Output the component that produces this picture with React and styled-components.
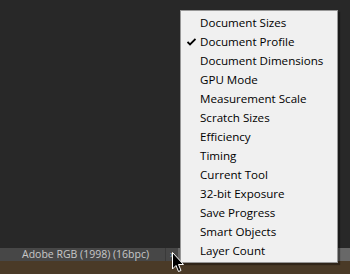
import React from 'react';
import styled, { createGlobalStyle } from 'styled-components';

const GlobalStyle = createGlobalStyle`
  html, body {
    margin: 0;
    padding: 0;
    background: #282828;
  }
  * { box-sizing: border-box; }
`

const Screen = styled.div`
  position: relative;
  width: 350px;
  height: 274px;
  display: flex;
  flex-direction: column;
  overflow: hidden;
  font-family: "Open Sans", "Noto Sans", sans-serif;
`
const Workspace = styled.div`
  flex: 1;
  background: #282828;
`
const StatusBar = styled.div`
  height: 13px;
  display: flex;
  align-items: center;
  background: #474747;
`
const StatusText = styled.div`
  width: 166px;
  padding-left: 22px;
  font-size: 10.5px;
  color: #c8c8c8;
  line-height: 13px;
  white-space: nowrap;
  border-right: 1px solid #3a3a3a;
`
const Expander = styled.div`
  width: 12px;
  padding-left: 4px;
  font-size: 10px;
  line-height: 13px;
  color: #bcbcbc;
`
const StatusRest = styled.div`
  flex: 1;
  align-self: stretch;
  background: #686868;
`
const Footer = styled.div`
  height: 13px;
  background: #4a3a27;
`

const Menu = styled.ul`
  position: absolute;
  left: 180px;
  top: 10px;
  width: 158px;
  margin: 0;
  padding: 2px 0 2px;
  list-style: none;
  background: #f0f0f0;
  border: 1px solid #979797;
  box-shadow: 2px 2px 1px rgba(0, 0, 0, 0.35);
`
const Item = styled.li`
  position: relative;
  height: 19px;
  line-height: 20px;
  padding-left: 19px;
  font-size: 11.6px;
  color: #000;
  white-space: nowrap;
`
const Check = styled.svg`
  position: absolute;
  left: 6px;
  top: 6px;
`
const Cursor = styled.svg`
  position: absolute;
  left: 172px;
  top: 252px;
`

const items = [
  'Document Sizes',
  'Document Profile',
  'Document Dimensions',
  'GPU Mode',
  'Measurement Scale',
  'Scratch Sizes',
  'Efficiency',
  'Timing',
  'Current Tool',
  '32-bit Exposure',
  'Save Progress',
  'Smart Objects',
  'Layer Count',
]

function App() {
  return (
    <>
      <GlobalStyle />
      <Screen>
        <Workspace />
        <StatusBar>
          <StatusText>Adobe RGB (1998) (16bpc)</StatusText>
          <Expander>&#x203A;</Expander>
          <StatusRest />
        </StatusBar>
        <Footer />
        <Menu>
          {items.map((label, i) => (
            <Item key={label}>
              {i === 1 && (
                <Check width="9" height="8" viewBox="0 0 9 8">
                  <path d="M0.5 4 L3 6.5 L8.5 1" stroke="#000" strokeWidth="1.8" fill="none" />
                </Check>
              )}
              {label}
            </Item>
          ))}
        </Menu>
        <Cursor width="13" height="22" viewBox="0 0 13 22">
          <path d="M0.5 0.5 L0.5 17 L4 13.5 L6.5 19.5 L9 18.5 L6.5 12.5 L11.5 12.5 Z" fill="#000" stroke="#fff" strokeWidth="1" />
        </Cursor>
      </Screen>
    </>
  );
}

export default App;
